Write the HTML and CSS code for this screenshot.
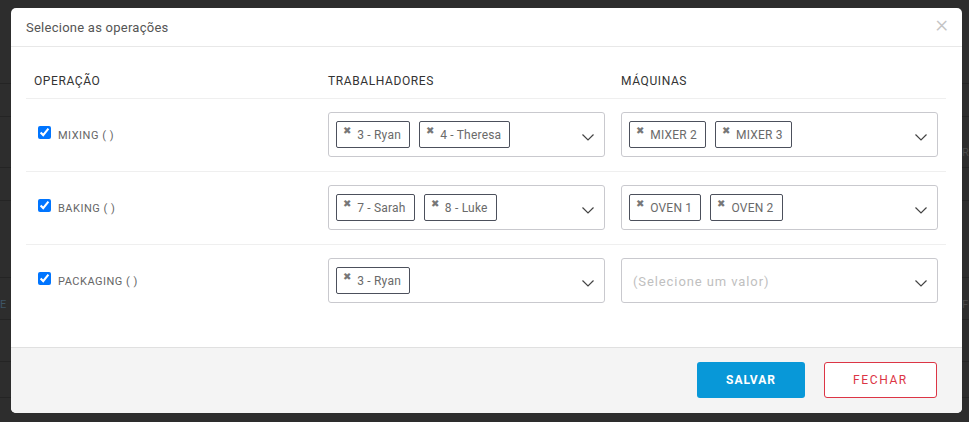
FILE: index.html
```html
<!DOCTYPE html>
<html lang="pt">
<head>
<meta charset="utf-8">
<title>Selecione as operações</title>
<link rel="stylesheet" href="styles.css">
</head>
<body>
<div class="page">
  <div class="bg-row h84"></div>
  <div class="bg-row h33"></div>
  <div class="bg-row h51"><span class="bg-text right">RE</span></div>
  <div class="bg-row h33"></div>
  <div class="bg-row h77"></div>
  <div class="bg-row h42"><span class="bg-text left">E</span><span class="bg-text right">F</span></div>
  <div class="bg-row h42"></div>
  <div class="bg-row h36"></div>
</div>

<div class="modal">
  <div class="modal-header">
    <span class="modal-title">Selecione as operações</span>
    <span class="modal-close">&times;</span>
  </div>
  <div class="modal-body">
    <div class="grid">
      <div class="row head">
        <div class="cell">OPERAÇÃO</div>
        <div class="cell">TRABALHADORES</div>
        <div class="cell">MÁQUINAS</div>
      </div>

      <div class="row">
        <div class="cell op"><label class="check"><input type="checkbox" checked> <span>MIXING ( )</span></label></div>
        <div class="cell">
          <div class="select">
            <div class="tags"><span class="tag"><span class="x">✖</span>3 - Ryan</span><span class="tag"><span class="x">✖</span>4 - Theresa</span></div>
            <span class="chev"><svg width="12" height="7" viewBox="0 0 12 7"><path d="M0.5 0.5 L6 6 L11.5 0.5" fill="none" stroke="#444" stroke-width="1.2"/></svg></span>
          </div>
        </div>
        <div class="cell">
          <div class="select">
            <div class="tags"><span class="tag"><span class="x">✖</span>MIXER 2</span><span class="tag"><span class="x">✖</span>MIXER 3</span></div>
            <span class="chev"><svg width="12" height="7" viewBox="0 0 12 7"><path d="M0.5 0.5 L6 6 L11.5 0.5" fill="none" stroke="#444" stroke-width="1.2"/></svg></span>
          </div>
        </div>
      </div>

      <div class="row">
        <div class="cell op"><label class="check"><input type="checkbox" checked> <span>BAKING ( )</span></label></div>
        <div class="cell">
          <div class="select">
            <div class="tags"><span class="tag"><span class="x">✖</span>7 - Sarah</span><span class="tag"><span class="x">✖</span>8 - Luke</span></div>
            <span class="chev"><svg width="12" height="7" viewBox="0 0 12 7"><path d="M0.5 0.5 L6 6 L11.5 0.5" fill="none" stroke="#444" stroke-width="1.2"/></svg></span>
          </div>
        </div>
        <div class="cell">
          <div class="select">
            <div class="tags"><span class="tag"><span class="x">✖</span>OVEN 1</span><span class="tag"><span class="x">✖</span>OVEN 2</span></div>
            <span class="chev"><svg width="12" height="7" viewBox="0 0 12 7"><path d="M0.5 0.5 L6 6 L11.5 0.5" fill="none" stroke="#444" stroke-width="1.2"/></svg></span>
          </div>
        </div>
      </div>

      <div class="row last">
        <div class="cell op"><label class="check"><input type="checkbox" checked> <span>PACKAGING ( )</span></label></div>
        <div class="cell">
          <div class="select">
            <div class="tags"><span class="tag"><span class="x">✖</span>3 - Ryan</span></div>
            <span class="chev"><svg width="12" height="7" viewBox="0 0 12 7"><path d="M0.5 0.5 L6 6 L11.5 0.5" fill="none" stroke="#444" stroke-width="1.2"/></svg></span>
          </div>
        </div>
        <div class="cell">
          <div class="select">
            <div class="tags"><span class="placeholder">(Selecione um valor)</span></div>
            <span class="chev"><svg width="12" height="7" viewBox="0 0 12 7"><path d="M0.5 0.5 L6 6 L11.5 0.5" fill="none" stroke="#444" stroke-width="1.2"/></svg></span>
          </div>
        </div>
      </div>
    </div>
  </div>
  <div class="modal-footer">
    <button class="btn btn-primary">SALVAR</button>
    <button class="btn btn-outline">FECHAR</button>
  </div>
</div>
</body>
</html>
```

FILE: styles.css
```css
* { box-sizing: border-box; }

html, body {
  margin: 0;
  padding: 0;
}

body {
  width: 969px;
  height: 422px;
  overflow: hidden;
  background: #2d2d2d;
  font-family: Roboto, "Liberation Sans", sans-serif;
  position: relative;
}

.page {
  display: flex;
  flex-direction: column;
}

.bg-row {
  border-bottom: 1px solid #242424;
  position: relative;
}
.h84 { height: 84px; }
.h33 { height: 33px; }
.h51 { height: 51px; }
.h77 { height: 77px; }
.h42 { height: 42px; }
.h36 { height: 36px; }

.bg-text {
  position: absolute;
  bottom: 8px;
  font-size: 13px;
  color: #3e5566;
}
.bg-text.left { left: 0; font-size: 11px; }
.bg-text.right { left: 962px; font-size: 11px; color: #4a4a4a; }

.modal {
  position: absolute;
  left: 11px;
  top: 8px;
  width: 951px;
  height: 405px;
  background: #fff;
  border-radius: 5px;
  overflow: hidden;
  display: flex;
  flex-direction: column;
}

.modal-header {
  height: 39px;
  border-bottom: 1px solid #e8e8e8;
  display: flex;
  align-items: center;
  justify-content: space-between;
  padding: 0 14px 0 15px;
}

.modal-title {
  font-size: 13px;
  color: #555;
  letter-spacing: 0.25px;
}

.modal-close {
  font-size: 24px;
  line-height: 1;
  color: #c4c4c4;
  font-weight: 300;
  margin-top: -6px;
}

.modal-body {
  flex: 1;
  padding: 15px 16px 0 15px;
}

.grid {
  display: flex;
  flex-direction: column;
}

.row {
  display: grid;
  grid-template-columns: 294px 293px 333px;
  height: 73px;
  border-bottom: 1px solid #efefef;
  align-items: start;
  padding-top: 13px;
}

.row.head {
  height: 37px;
  align-items: center;
  padding-top: 0;
}

.row.last {
  border-bottom: none;
  height: 72px;
}

.cell {
  padding: 0 8px;
}

.head .cell {
  font-size: 12px;
  color: #333;
  letter-spacing: 0.6px;
  padding-top: 1px;
}

.op {
  align-self: center;
  margin-top: -13px;
}

.check {
  display: flex;
  align-items: center;
  font-size: 11px;
  color: #666;
  letter-spacing: 0.5px;
}

.check input {
  width: 13px;
  height: 13px;
  margin: 0 7px 0 4px;
  position: relative;
  top: -3px;
  accent-color: #0075ff;
}

.select {
  height: 45px;
  border: 1px solid #c9c9ce;
  border-radius: 3px;
  display: flex;
  align-items: center;
  justify-content: space-between;
  padding: 0 10px 0 7px;
}

.tags {
  display: flex;
  align-items: center;
  gap: 9px;
}

.tag {
  height: 27px;
  border: 1px solid #4c505c;
  border-radius: 2px;
  display: flex;
  align-items: center;
  padding: 0 8px 0 6px;
  font-size: 12px;
  color: #6a6a6a;
  letter-spacing: 0.2px;
  position: relative;
}

.tag .x {
  font-size: 10px;
  color: #777;
  margin-right: 6px;
  position: relative;
  top: -4px;
}

.placeholder {
  font-size: 13px;
  color: #c0c0c0;
  letter-spacing: 0.9px;
  padding-left: 4px;
  padding-top: 2px;
}

.chev {
  display: flex;
  padding-top: 5px;
}

.modal-footer {
  height: 66px;
  border-top: 1px solid #e0e0e0;
  background: #f4f4f4;
  display: flex;
  align-items: flex-start;
  justify-content: flex-end;
  gap: 19px;
  padding: 14px 25px 0 0;
}

.btn {
  height: 36px;
  border-radius: 3px;
  font-family: Roboto, "Liberation Sans", sans-serif;
  font-size: 12px;
  cursor: pointer;
}

.btn-primary {
  width: 108px;
  background: #0898d8;
  border: none;
  color: #fff;
  font-weight: 700;
  letter-spacing: 1px;
}

.btn-outline {
  width: 113px;
  background: #fff;
  border: 1px solid #dc3545;
  color: #dc3545;
  letter-spacing: 1.6px;
}
```
